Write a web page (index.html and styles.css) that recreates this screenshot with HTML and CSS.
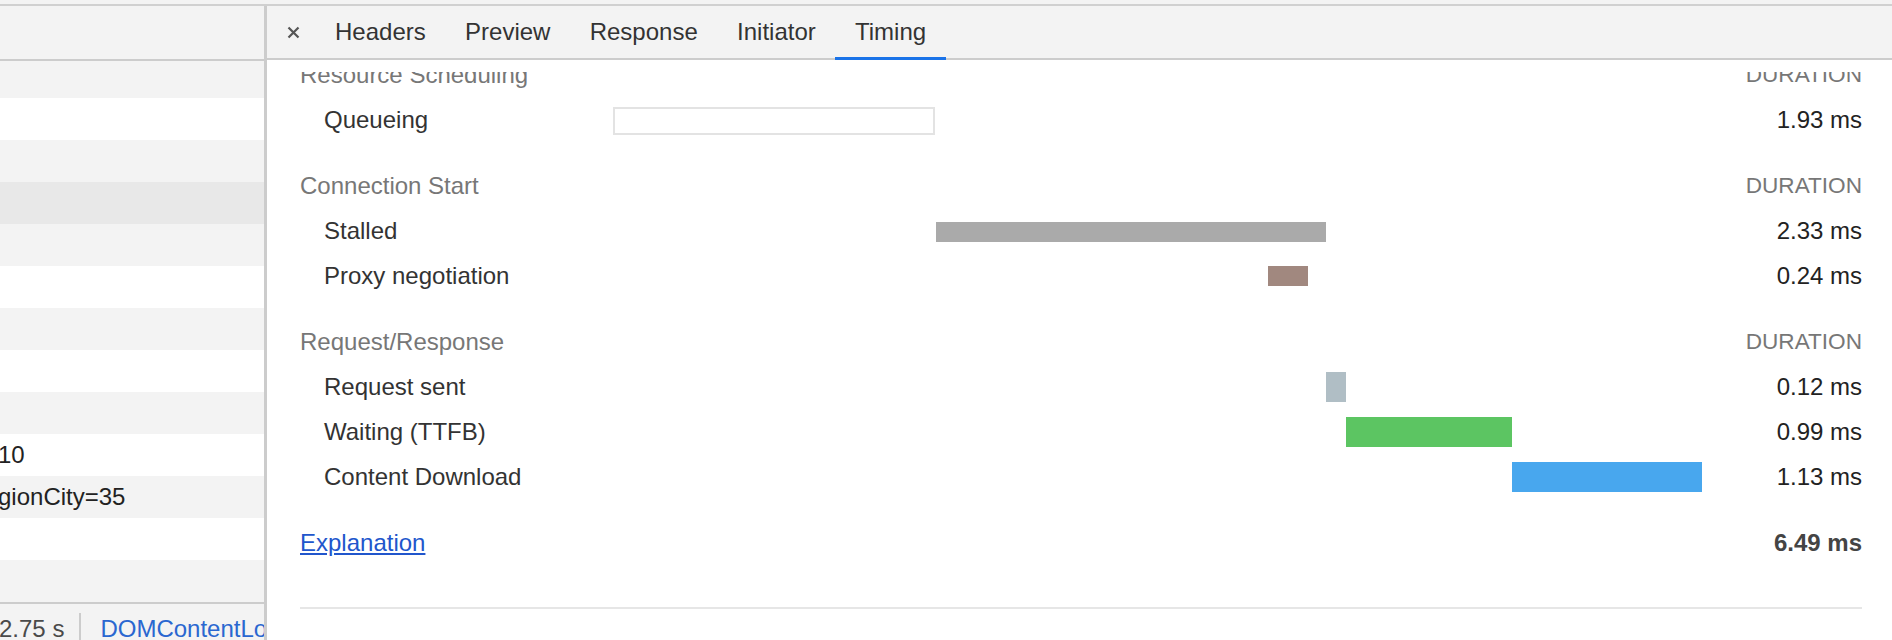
FILE: index.html
```html
<!DOCTYPE html>
<html lang="en">
<head>
<meta charset="utf-8">
<title>Network Timing</title>
<link rel="stylesheet" href="styles.css">
</head>
<body>
<div class="app">
  <div class="topstrip"></div>
  <div class="main">
    <div class="left">
      <div class="left-head"></div>
      <div class="rows">
        <div class="row grey first"></div>
        <div class="row"></div>
        <div class="row grey"></div>
        <div class="row selected"></div>
        <div class="row grey"></div>
        <div class="row"></div>
        <div class="row grey"></div>
        <div class="row"></div>
        <div class="row grey"></div>
        <div class="row"><span class="cell-text">10</span></div>
        <div class="row grey"><span class="cell-text">gionCity=35</span></div>
        <div class="row"></div>
        <div class="row grey"></div>
      </div>
      <div class="footer">
        <span class="foot-text">2.75 s</span>
        <span class="foot-sep"></span>
        <span class="foot-link">DOMContentLoaded: 1.20 s</span>
      </div>
    </div>
    <div class="right">
      <div class="tabbar">
        <div class="close">
          <svg width="13" height="13" viewBox="0 0 13 13"><path d="M1.5 1.5L11.5 11.5M11.5 1.5L1.5 11.5" stroke="#555" stroke-width="2.2" stroke-linecap="butt"/></svg>
        </div>
        <div class="tab">Headers</div>
        <div class="tab">Preview</div>
        <div class="tab">Response</div>
        <div class="tab">Initiator</div>
        <div class="tab active">Timing</div>
      </div>
      <div class="content">
        <div class="scroller">
          <div class="timing">
            <div class="sec-title"><span>Resource Scheduling</span><span class="dur">DURATION</span></div>
            <div class="trow">
              <div class="label">Queueing</div>
              <div class="track"><div class="bar queueing" style="margin-left:0px;width:322px"></div></div>
              <div class="value">1.93 ms</div>
            </div>
            <div class="spacer"></div>

            <div class="sec-title"><span>Connection Start</span><span class="dur">DURATION</span></div>
            <div class="trow">
              <div class="label">Stalled</div>
              <div class="track"><div class="bar stalled" style="margin-left:323px;width:390px"></div></div>
              <div class="value">2.33 ms</div>
            </div>
            <div class="trow">
              <div class="label">Proxy negotiation</div>
              <div class="track"><div class="bar proxy" style="margin-left:655px;width:40px"></div></div>
              <div class="value">0.24 ms</div>
            </div>
            <div class="spacer"></div>

            <div class="sec-title"><span>Request/Response</span><span class="dur">DURATION</span></div>
            <div class="trow">
              <div class="label">Request sent</div>
              <div class="track"><div class="bar sending" style="margin-left:713px;width:20px"></div></div>
              <div class="value">0.12 ms</div>
            </div>
            <div class="trow">
              <div class="label">Waiting (TTFB)</div>
              <div class="track"><div class="bar waiting" style="margin-left:733px;width:166px"></div></div>
              <div class="value">0.99 ms</div>
            </div>
            <div class="trow">
              <div class="label">Content Download</div>
              <div class="track"><div class="bar receiving" style="margin-left:899px;width:190px"></div></div>
              <div class="value">1.13 ms</div>
            </div>
            <div class="spacer"></div>

            <div class="total-row">
              <a class="explain" href="#">Explanation</a>
              <span class="total">6.49 ms</span>
            </div>
            <div class="bottom-line"></div>
          </div>
        </div>
      </div>
    </div>
  </div>
</div>
</body>
</html>
```
FILE: styles.css
```css
* { box-sizing: border-box; }

html, body {
  margin: 0;
  padding: 0;
}

body {
  width: 1892px;
  height: 640px;
  overflow: hidden;
  background: #ffffff;
  font-family: "Liberation Sans", Arial, Helvetica, sans-serif;
  font-size: 24px;
  color: #333333;
}

.app {
  display: flex;
  flex-direction: column;
  height: 640px;
}

.topstrip {
  height: 6px;
  flex: none;
  background: #f3f3f3;
  border-bottom: 2px solid #d0d0d0;
}

.main {
  flex: 1;
  display: flex;
  min-height: 0;
}

/* ---------- left network table ---------- */
.left {
  width: 267px;
  flex: none;
  border-right: 3px solid #cccccc;
  display: flex;
  flex-direction: column;
  overflow: hidden;
  background: #ffffff;
}

.left-head {
  height: 55px;
  flex: none;
  background: #f3f3f3;
  border-bottom: 2px solid #cccccc;
}

.rows {
  display: flex;
  flex-direction: column;
  flex: none;
}

.row {
  height: 42px;
  display: flex;
  align-items: center;
  background: #ffffff;
  white-space: nowrap;
  overflow: hidden;
  color: #222222;
}

.row.first { height: 37px; }
.row.grey { background: #f3f3f3; }
.row.selected { background: #e8e8e8; }

.cell-text {
  margin-left: -2px;
}

.footer {
  flex: none;
  height: 52px;
  border-top: 2px solid #cccccc;
  background: #f3f3f3;
  display: flex;
  align-items: center;
  white-space: nowrap;
  overflow: hidden;
}

.foot-text {
  margin-left: -1px;
  color: #4a4a4a;
  padding-right: 15px;
}

.foot-sep {
  width: 2px;
  height: 32px;
  background: #cccccc;
  flex: none;
}

.foot-link {
  padding-left: 19px;
  color: #2a67d0;
}

/* ---------- right panel ---------- */
.right {
  flex: 1;
  display: flex;
  flex-direction: column;
  min-width: 0;
}

.tabbar {
  height: 54px;
  flex: none;
  background: #f3f3f3;
  border-bottom: 2px solid #cccccc;
  display: flex;
  align-items: stretch;
}

.close {
  width: 48.4px;
  flex: none;
  display: flex;
  align-items: center;
  padding-left: 20px;
  padding-top: 1px;
}

.close svg { display: block; }

.tab {
  position: relative;
  padding: 0 19.65px;
  display: flex;
  align-items: center;
  color: #333333;
  white-space: nowrap;
}

.tab.active::after {
  content: "";
  position: absolute;
  left: 0;
  right: 0;
  bottom: -2px;
  height: 3px;
  background: #1a73e8;
}

.content {
  flex: 1;
  min-height: 0;
  display: flex;
  flex-direction: column;
  padding-top: 12px;
  background: #ffffff;
}

.scroller {
  flex: 1;
  min-height: 0;
  overflow: hidden;
}

.timing {
  margin-top: -19px;
  display: flex;
  flex-direction: column;
}

.sec-title {
  height: 44px;
  display: flex;
  align-items: center;
  justify-content: space-between;
  padding: 0 30px 0 33px;
  color: #777777;
  white-space: nowrap;
}

.dur {
  font-size: 22.6px;
  color: #777777;
}

.trow {
  height: 45px;
  display: grid;
  grid-template-columns: 346px 1089px 1fr;
  align-items: center;
  padding-right: 30px;
}

.label {
  padding-left: 57px;
  color: #333333;
  white-space: nowrap;
}

.track {
  height: 100%;
  display: flex;
  align-items: center;
}

.bar {
  flex: none;
}

.bar.queueing {
  height: 28px;
  border: 2px solid #e3e3e3;
  background: #ffffff;
  margin-top: 3px;
}

.bar.stalled {
  height: 20px;
  background: #aaaaaa;
  margin-top: 3px;
}

.bar.proxy {
  height: 20px;
  background: #a1887f;
}

.bar.sending {
  height: 30px;
  background: #b0bec5;
}

.bar.waiting {
  height: 30px;
  background: #5cc562;
}

.bar.receiving {
  height: 30px;
  background: #48a7ee;
}

.value {
  text-align: right;
  color: #222222;
  white-space: nowrap;
}

.spacer {
  height: 22px;
}

.total-row {
  height: 44px;
  display: flex;
  align-items: center;
  justify-content: space-between;
  padding: 0 30px 0 33px;
}

.explain {
  color: #2156cc;
  text-decoration: underline;
}

.total {
  font-weight: bold;
  color: #444444;
}

.bottom-line {
  margin: 42px 30px 0 33px;
  height: 2px;
  background: #e6e6e6;
}
```
